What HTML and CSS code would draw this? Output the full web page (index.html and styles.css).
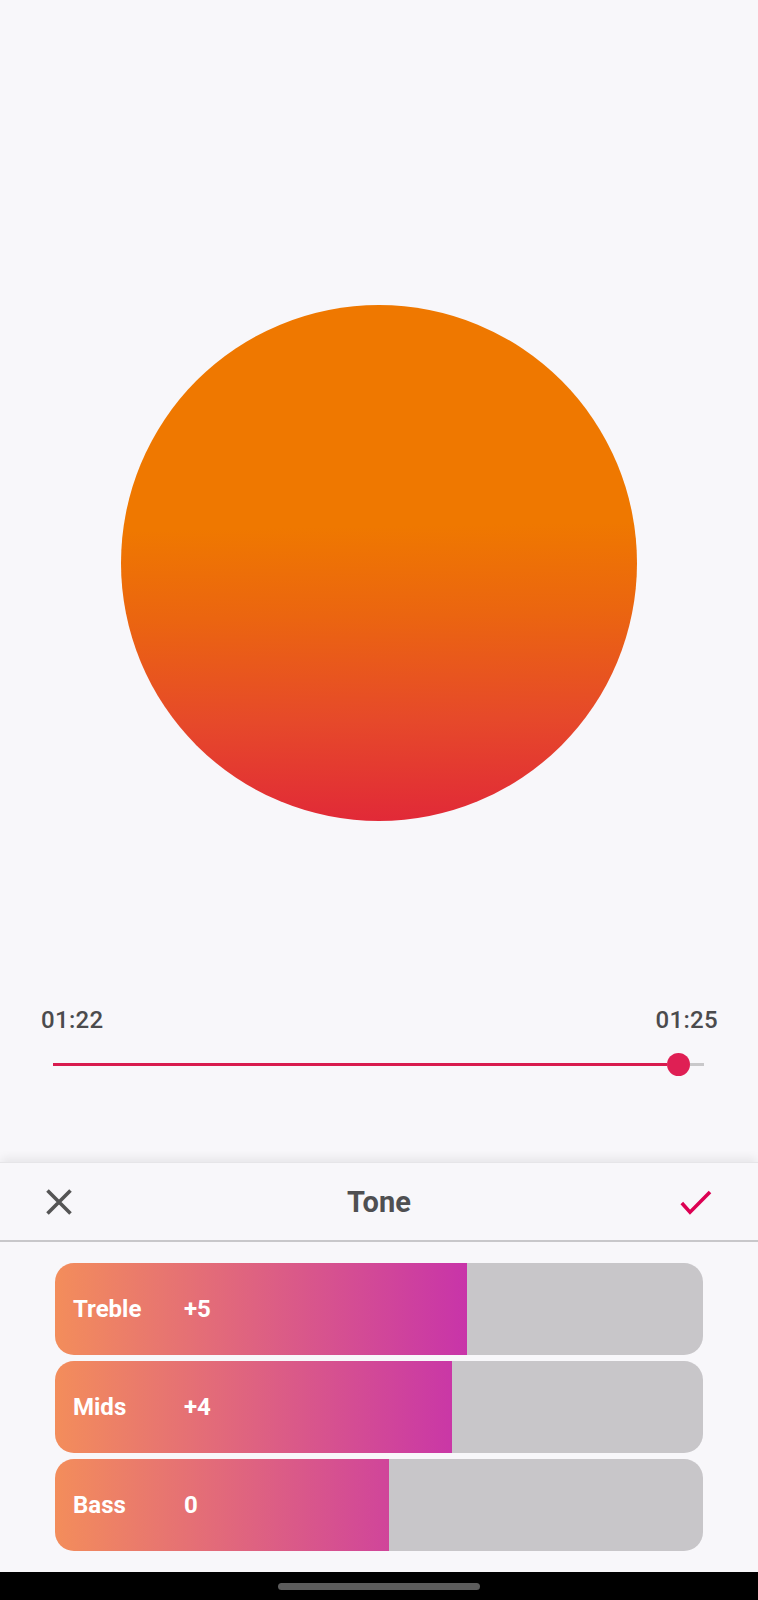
FILE: index.html
```html
<!DOCTYPE html>
<html lang="en">
<head>
<meta charset="utf-8">
<title>Tone</title>
<link rel="stylesheet" href="styles.css">
</head>
<body>
<div class="screen">
  <main class="player">
    <div class="artwork"></div>
    <div class="times">
      <span class="time">01:22</span>
      <span class="time">01:25</span>
    </div>
    <div class="seek">
      <div class="seek-played"></div>
      <div class="seek-thumb"></div>
      <div class="seek-rest"></div>
    </div>
  </main>

  <section class="sheet">
    <header class="sheet-header">
      <button class="icon-btn close" aria-label="Close">
        <svg width="26" height="26" viewBox="0 0 26 26"><path d="M1.5 1.5 L24.5 24.5 M24.5 1.5 L1.5 24.5" fill="none" stroke="#555555" stroke-width="3.6"/></svg>
      </button>
      <h1 class="sheet-title">Tone</h1>
      <button class="icon-btn confirm" aria-label="Apply">
        <svg width="32" height="28" viewBox="0 0 32 28"><path d="M1.8 15 L10 24.2 L30 4" fill="none" stroke="#DC0052" stroke-width="3.6"/></svg>
      </button>
    </header>
    <div class="divider"></div>
    <div class="bands">
      <div class="band" style="--fill: 63.6%"><span class="band-name">Treble</span><span class="band-value">+5</span></div>
      <div class="band" style="--fill: 61.3%"><span class="band-name">Mids</span><span class="band-value">+4</span></div>
      <div class="band" style="--fill: 51.5%"><span class="band-name">Bass</span><span class="band-value">0</span></div>
    </div>
  </section>

  <nav class="navbar"><div class="home-pill"></div></nav>
</div>
</body>
</html>
```

FILE: styles.css
```css
* { box-sizing: border-box; }

html, body {
  margin: 0;
  padding: 0;
  background: #F8F7FA;
}

body {
  font-family: Roboto, "DejaVu Sans", sans-serif;
}

.screen {
  width: 758px;
  height: 1600px;
  display: flex;
  flex-direction: column;
  background: #F8F7FA;
}

.player {
  height: 1162px;
  display: flex;
  flex-direction: column;
  align-items: center;
  padding-top: 305px;
}

.artwork {
  width: 516px;
  height: 516px;
  border-radius: 50%;
  background: linear-gradient(179deg, #EF7800 0%, #EF7800 43%, #EB6510 60%, #E6492A 80%, #E12838 100%);
}

.times {
  align-self: stretch;
  display: flex;
  justify-content: space-between;
  margin-top: 185px;
  padding: 0 40px 0 41px;
  height: 28px;
}

.time {
  font-size: 24px;
  line-height: 28px;
  font-weight: 500;
  color: #4B4B4D;
  letter-spacing: 0.3px;
}

.seek {
  align-self: stretch;
  display: flex;
  align-items: center;
  margin: 18px 54px 0 53px;
  height: 24px;
}

.seek-played {
  width: 614px;
  height: 3px;
  background: #D81B4E;
}

.seek-thumb {
  width: 23px;
  height: 23px;
  border-radius: 50%;
  background: #DF1F54;
  flex: none;
}

.seek-rest {
  flex: 1;
  height: 3px;
  background: #C9C8CA;
}

.sheet {
  height: 410px;
  background: #F8F7FA;
  box-shadow: 0 -5px 9px -1px rgba(0, 0, 0, 0.07);
  border-top: 1px solid #E6E5E8;
  display: flex;
  flex-direction: column;
  position: relative;
}

.sheet-header {
  height: 77px;
  display: grid;
  grid-template-columns: 1fr auto 1fr;
  align-items: center;
  padding: 0 46px 0 46px;
}

.icon-btn {
  border: 0;
  background: none;
  padding: 0;
  display: flex;
  align-items: center;
  justify-content: center;
}

.close { justify-self: start; }
.confirm { justify-self: end; }

.sheet-title {
  margin: 0;
  font-size: 29px;
  line-height: 34px;
  font-weight: 700;
  color: #4F4F51;
}

.divider {
  height: 2px;
  background: #C8C7CA;
}

.bands {
  display: flex;
  flex-direction: column;
  gap: 6px;
  padding: 21px 55px 21px 55px;
}

.band {
  height: 92px;
  border-radius: 19px;
  display: flex;
  align-items: center;
  padding-left: 18px;
  color: #FFFFFF;
  font-size: 24px;
  font-weight: 700;
  background:
    linear-gradient(to right, transparent var(--fill), #C8C6C9 var(--fill)),
    linear-gradient(to right, #F38D5B 0px, #C834A9 412px);
}

.band-name {
  width: 111px;
}

.navbar {
  height: 28px;
  background: #000000;
  display: flex;
  justify-content: center;
  padding-top: 11px;
}

.home-pill {
  width: 202px;
  height: 7px;
  border-radius: 4px;
  background: #5C5C5C;
}
```
